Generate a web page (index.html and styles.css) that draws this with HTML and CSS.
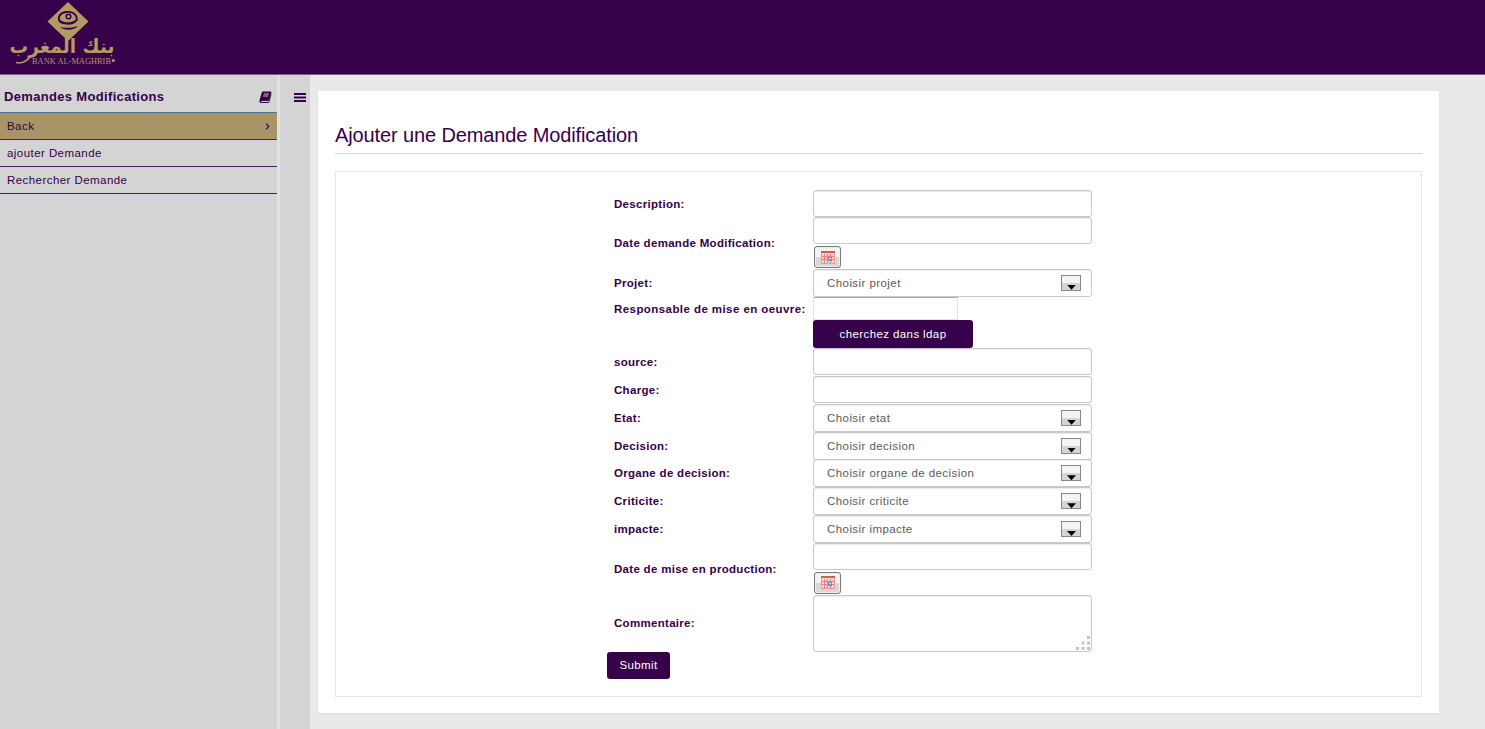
FILE: index.html
```html
<!DOCTYPE html>
<html lang="fr">
<head>
<meta charset="utf-8">
<title>Ajouter une Demande Modification</title>
<link rel="stylesheet" href="styles.css">
</head>
<body>
<svg class="defs" width="0" height="0" aria-hidden="true">
  <symbol id="cal" viewBox="0 0 14 13">
    <rect x="0.5" y="0.5" width="13" height="12" fill="#fbd3cf" stroke="#ee9a94"/>
    <path d="M0 1h14" stroke="#c9605a" stroke-width="2"/>
    <path d="M3.5 3v9M6.5 3v9M9.5 3v9M1 5.5h12M1 8.5h12" stroke="#f08078"/>
    <rect x="7" y="6" width="4" height="4" fill="#6d8fe0"/>
    <rect x="8" y="7" width="2" height="1" fill="#dfe8ff"/>
  </symbol>
</svg>
<header class="topbar">
  <svg class="logo" width="130" height="74" viewBox="0 0 130 74">
    <path d="M68 2L88.500 21.500L68 41L47.500 21.500Z" fill="#b39b62"/>
    <path d="M60 22C57 17 60 13 66 12C73 11 78 15 76.500 21" fill="none" stroke="#37004a" stroke-width="1.900"/>
    <circle cx="68.500" cy="16.500" r="2.300" fill="none" stroke="#37004a" stroke-width="1.500"/>
    <path d="M60 20C65 23.500 72 23 77 19C77 25 68 26 60 23Z" fill="#37004a"/>
    <path d="M60 27C66 28.500 72 28 78 26C75 30.500 64 31 60 27Z" fill="#37004a"/>
    <text class="logo-ar" x="62" y="53" text-anchor="middle" textLength="105" lengthAdjust="spacingAndGlyphs">بنك المغرب</text>
    <path d="M16 62.500C22 64 27 61 31 56" fill="none" stroke="#b39b62" stroke-width="1.500"/>
    <text class="logo-fr" x="32" y="63.500" textLength="79" lengthAdjust="spacingAndGlyphs">BANK AL-MAGHRIB</text>
    <circle cx="113.300" cy="60.500" r="1.500" fill="#b39b62"/>
  </svg>
</header>
<div class="body">
  <nav class="sidebar">
    <div class="menu-title"><span>Demandes Modifications</span>
      <svg width="13" height="12" viewBox="0 0 13 12"><path d="M4 0.500H11.500Q12.800 0.500 12.400 2L10.200 9Q9.900 10 9 10H2.500Q1.700 10.200 2.200 10.900H9.500L12.500 3V4L10.300 11Q10 12 9 12H2Q0 12 0.400 9.500L2.700 1.700Q3 0.500 4 0.500Z" fill="#37004a"/><path d="M4.800 3h5M4.200 5h5" stroke="#d4d4d4" stroke-width="0.900"/></svg>
    </div>
    <a class="item active"><span>Back</span><svg width="5" height="7" viewBox="0 0 5 7"><path d="M1 0.700L3.800 3.500L1 6.300" fill="none" stroke="#37004a" stroke-width="1.100"/></svg></a>
    <a class="item">ajouter Demande</a>
    <a class="item">Rechercher Demande</a>
  </nav>
  <div class="rail"><svg width="12" height="9" viewBox="0 0 12 9"><path d="M0 1h12M0 4.500h12M0 8h12" stroke="#37004a" stroke-width="1.900"/></svg></div>
  <main class="content">
    <section class="panel">
      <h1>Ajouter une Demande Modification</h1>
      <div class="fieldset">
        <form class="form">
          <div class="row r27"><label>Description:</label><div class="field"></div></div>
          <div class="row r52"><label>Date demande Modification:</label><div class="stack"><div class="field"></div><span class="cal"><svg width="14" height="13"><use href="#cal"/></svg></span></div></div>
          <div class="row r28"><label>Projet:</label><div class="field select"><span>Choisir projet</span><i class="arrow"></i></div></div>
          <div class="row r23"><label class="wide">Responsable de mise en oeuvre:</label><div class="plain"></div></div>
          <div class="row r28"><label></label><span class="btn ldap">cherchez dans ldap</span></div>
          <div class="row r28"><label>source:</label><div class="field"></div></div>
          <div class="row r28"><label>Charge:</label><div class="field"></div></div>
          <div class="row r28"><label>Etat:</label><div class="field select"><span>Choisir etat</span><i class="arrow"></i></div></div>
          <div class="row r28"><label>Decision:</label><div class="field select"><span>Choisir decision</span><i class="arrow"></i></div></div>
          <div class="row r28"><label>Organe de decision:</label><div class="field select"><span>Choisir organe de decision</span><i class="arrow"></i></div></div>
          <div class="row r28"><label>Criticite:</label><div class="field select"><span>Choisir criticite</span><i class="arrow"></i></div></div>
          <div class="row r28"><label>impacte:</label><div class="field select"><span>Choisir impacte</span><i class="arrow"></i></div></div>
          <div class="row r52"><label>Date de mise en production:</label><div class="stack"><div class="field"></div><span class="cal"><svg width="14" height="13"><use href="#cal"/></svg></span></div></div>
          <div class="row r57"><label>Commentaire:</label><div class="field area"><svg width="15" height="15" viewBox="0 0 15 15"><path d="M12 0h3v3h-3zM6.500 5.500h3v3h-3zM12 5.500h3v3h-3zM1 11h3v3H1zM6.500 11h3v3h-3zM12 11h3v3h-3z" fill="#c4c4c4"/></svg></div></div>
          <span class="btn submit">Submit</span>
        </form>
      </div>
    </section>
  </main>
</div>
</body>
</html>
```
FILE: styles.css
```css
* { box-sizing: border-box; }
body {
  margin: 0;
  height: 729px;
  overflow: hidden;
  display: flex;
  flex-direction: column;
  background: #e9e9e9;
  color: #37004a;
  font: 11.5px/16px "Liberation Sans", Arial, sans-serif;
}
.defs { display: none; }
svg { display: block; flex: none; }
.topbar { height: 75px; flex: none; background: #37004a; border-bottom: 1px solid #805a8c; }
.logo-ar { font: bold 20px "DejaVu Sans", sans-serif; fill: #b39b62; }
.logo-fr { font: 9px "Liberation Serif", serif; fill: #b39b62; }
.body { flex: 1; display: flex; }
.sidebar { width: 277px; background: #d4d4d4; }
.menu-title {
  height: 38px;
  padding: 7px 5px 0 4px;
  display: flex;
  align-items: center;
  justify-content: space-between;
  border-bottom: 1px solid #4a74a4;
  font-size: 13px;
  font-weight: bold;
  letter-spacing: 0.33px;
}
.item {
  height: 27px;
  padding: 0 7px;
  display: flex;
  align-items: center;
  justify-content: space-between;
  border-bottom: 1px solid #4d1c60;
  font-size: 11.5px;
  letter-spacing: 0.44px;
}
.active { background: #a99468; }
.rail {
  width: 33px;
  padding: 18px 0 0 14px;
  border-left: 3px solid #e0e0e0;
  background: #d4d4d4;
}
.content { flex: 1; padding: 16px 46px 16px 8px; }
.panel {
  height: 622px;
  padding: 32px 17px 0;
  background: #fff;
  box-shadow: 0 1px 2px #dcdcdc;
}
h1 {
  margin: 0 0 17px;
  height: 31px;
  border-bottom: 1px solid #d9d9d9;
  font-size: 20px;
  font-weight: normal;
  line-height: 24px;
  letter-spacing: -0.12px;
}
.fieldset { height: 526px; padding: 18px 0 0 271px; border: 1px solid #e5e5e5; }
.form { display: flex; flex-direction: column; width: 486px; }
.row { display: grid; grid-template-columns: 206px 279px; align-items: center; }
.row label { padding-left: 7px; font-weight: bold; letter-spacing: 0.3px; white-space: nowrap; }
.row .wide { padding-top: 1px; letter-spacing: 0.43px; }
.r23 { height: 23.500px; }
.r27 { height: 27px; }
.r28 { height: 27.850px; }
.r52 { height: 51.800px; }
.r57 { height: 57px; }
.field {
  height: 27px;
  border: 1px solid #c8c8c8;
  border-radius: 3px;
  background: #fff;
  box-shadow: inset 0 1px 1px #ececec;
}
.select {
  height: 28px;
  padding: 0 10px 0 13px;
  display: flex;
  align-items: center;
  justify-content: space-between;
  color: #5a5a5a;
  letter-spacing: 0.43px;
}
.arrow {
  width: 20px;
  height: 16px;
  border: 1px solid #888;
  background: linear-gradient(#f4f4f4 50%, #d4d4d4 51%);
}
.arrow::after {
  content: "";
  display: block;
  margin: 9px auto 0 5px;
  width: 9px;
  height: 5px;
  background: #000;
  clip-path: polygon(0 0, 100% 0, 50% 100%);
}
.stack { height: 52px; }
.cal {
  width: 27px;
  height: 22px;
  margin: 2px 0 0 1px;
  display: flex;
  align-items: center;
  justify-content: center;
  border: 1px solid #777;
  border-radius: 3px;
  background: linear-gradient(#f3f3f3 50%, #d8d8d8 51%);
  box-shadow: inset 0 0 0 1px #f0f0f0;
}
.plain { width: 145px; height: 23px; border: 1px solid #e1e1e8; border-top-color: #aaa; }
.btn {
  display: flex;
  align-items: center;
  justify-content: center;
  border-radius: 3px;
  background: #37004a;
  color: #fff;
  letter-spacing: 0.4px;
}
.ldap { width: 160px; height: 28px; padding-bottom: 1px; }
.submit { width: 63px; height: 27px; padding-bottom: 1px; }
.area { height: 57px; display: flex; align-items: flex-end; justify-content: flex-end; padding: 0 1px; }
```
